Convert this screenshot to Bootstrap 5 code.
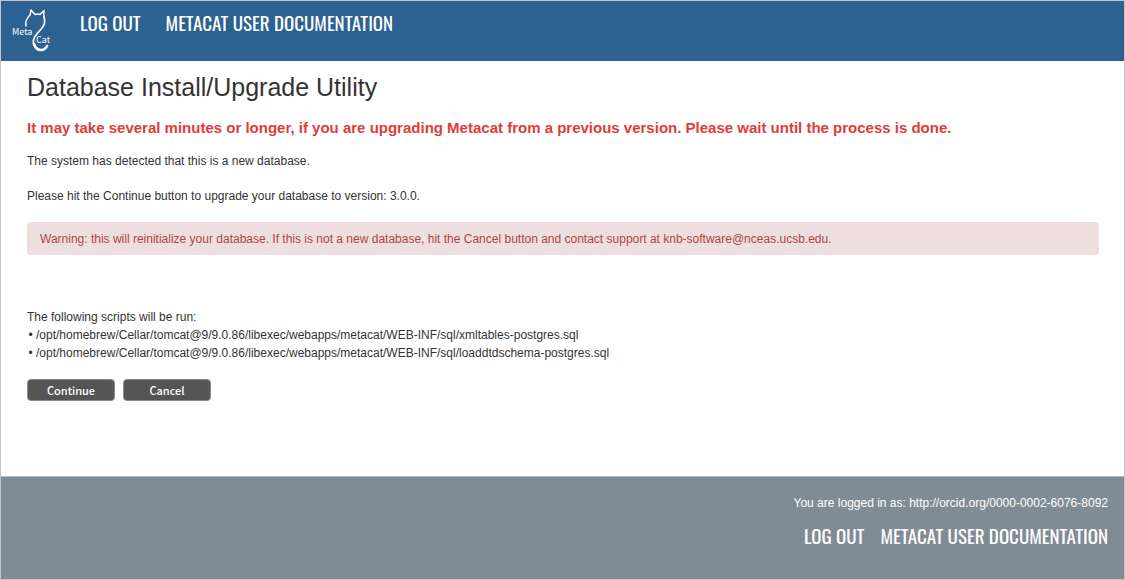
<!DOCTYPE html>
<html lang="en">
<head>
<meta charset="utf-8">
<meta name="viewport" content="width=device-width, initial-scale=1">
<title>Database Install/Upgrade Utility</title>
<link href="https://cdn.jsdelivr.net/npm/bootstrap@5.3.0/dist/css/bootstrap.min.css" rel="stylesheet">
<style>
  body { font: 12px/18px "Liberation Sans", Arial, sans-serif; color: #333; border: 1px solid #c4c4c4; }
  .site-header { background: #2d6191; height: 60px; padding: 8px 11px; }
  .site-link { font: 400 19px/26px Oswald, "Roboto Condensed", sans-serif; color: #fff; text-decoration: none; text-transform: uppercase; white-space: nowrap; }
  .header-links { gap: 25px; margin-left: 29px; }
  .content { padding: 10px 25px 16px 26px; }
  .page-title { font-size: 25px; line-height: 32px; font-weight: 400; margin-bottom: 16px; }
  .notice { font-size: 15px; line-height: 18px; font-weight: 700; color: #e03c39; margin-bottom: 15px; }
  .content p { margin-bottom: 17px; }
  .warning-box { background: #efdede; color: #ac4744; border-radius: 4px; border: 0; padding: 8px 13px 7px; margin-bottom: 53px; }
  .scripts { list-style-type: "•\00a0"; padding-left: 9px; margin-bottom: 17px; }
  .form-button { width: 88px; height: 22px; font: 500 11px/18px "Noto Sans CJK SC", sans-serif; color: #fff; background: #555; border: 1px solid #8c8c8c; border-radius: 4px; padding: 0; }
  .form-button:hover { color: #fff; background: #444; }
  .site-footer { background: #7f8c96; border-top: 1px solid #b3b9bd; padding: 17px 16px 31px; }
  .footer-links { gap: 16px; margin-top: 10px; }
</style>
</head>
<body class="d-flex flex-column min-vh-100">
<header class="site-header d-flex align-items-start">
  <svg width="39" height="44" viewBox="0 0 39 44" role="img" aria-label="MetaCat">
    <g fill="none" stroke="#fff" stroke-linecap="round" stroke-linejoin="round">
      <path stroke-width="1.5" d="M14 17C13 13 15 9 18 6L19 1L23 5.5Q26 4.500 28 5.500L32 1.500Q31.500 5 32 8"/>
      <path stroke-width="1.7" d="M32 8Q34 14 30 19L24 26Q20 31 22 36"/>
      <path stroke-width="2.600" d="M22 35Q24 41 29 41Q33 41 35 37"/>
    </g>
    <g fill="#fff" font-family="Noto Sans CJK SC, sans-serif" font-size="9">
      <text x="0" y="26">Meta</text>
      <text x="24" y="34">Cat</text>
    </g>
  </svg>
  <nav class="header-links d-flex" aria-label="Main">
    <a class="site-link" href="#">Log out</a>
    <a class="site-link" href="#">Metacat user documentation</a>
  </nav>
</header>
<main class="content flex-grow-1">
  <h1 class="page-title">Database Install/Upgrade Utility</h1>
  <div class="notice">It may take several minutes or longer, if you are upgrading Metacat from a previous version. Please wait until the process is done.</div>
  <p>The system has detected that this is a new database.</p>
  <p>Please hit the Continue button to upgrade your database to version: 3.0.0.</p>
  <div class="alert warning-box" role="alert">Warning: this will reinitialize your database. If this is not a new database, hit the Cancel button and contact support at knb-software@nceas.ucsb.edu.</div>
  <div>The following scripts will be run:</div>
  <ul class="scripts">
    <li>/opt/homebrew/Cellar/tomcat@9/9.0.86/libexec/webapps/metacat/WEB-INF/sql/xmltables-postgres.sql</li>
    <li>/opt/homebrew/Cellar/tomcat@9/9.0.86/libexec/webapps/metacat/WEB-INF/sql/loaddtdschema-postgres.sql</li>
  </ul>
  <form class="d-flex gap-2">
    <button class="btn form-button" type="button">Continue</button>
    <button class="btn form-button" type="button">Cancel</button>
  </form>
</main>
<footer class="site-footer d-flex flex-column align-items-end text-white">
  <div>You are logged in as: http://orcid.org/0000-0002-6076-8092</div>
  <nav class="footer-links d-flex" aria-label="Footer">
    <a class="site-link" href="#">Log out</a>
    <a class="site-link" href="#">Metacat user documentation</a>
  </nav>
</footer>
<script src="https://cdn.jsdelivr.net/npm/bootstrap@5.3.0/dist/js/bootstrap.bundle.min.js"></script>
</body>
</html>
